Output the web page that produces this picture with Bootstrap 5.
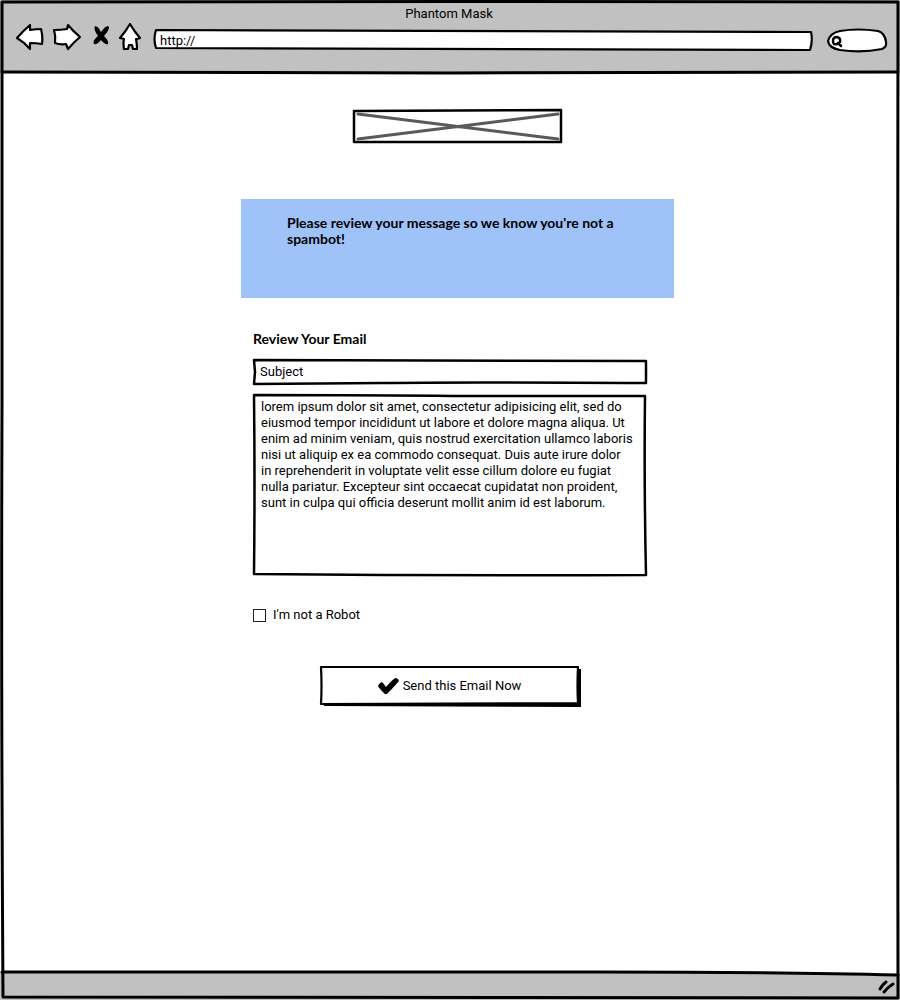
<!DOCTYPE html>
<html lang="en">
<head>
<meta charset="utf-8">
<meta name="viewport" content="width=device-width, initial-scale=1">
<title>Phantom Mask</title>
<link href="https://cdn.jsdelivr.net/npm/bootstrap@5.3.0/dist/css/bootstrap.min.css" rel="stylesheet">
<style>
body { font: 13px/16px Roboto, "Liberation Sans", sans-serif; color: #000; background: #fff; }
.chrome-bar { background: #c1c1c1; }
.top-bar { height: 72px; padding: 6px 12px 0 16px; }
.window-title { padding-right: 6px; }
.bottom-bar { height: 28px; }
.toolbar { height: 30px; margin-top: 1px; }
.sketch { fill: none; stroke: #000; stroke-width: 3; stroke-linejoin: round; stroke-linecap: round; }
.sketch path { vector-effect: non-scaling-stroke; }
.frame { position: absolute; inset: 0; width: 100%; height: 100%; overflow: visible; pointer-events: none; }
.paper { fill: #fff; }
.fine { stroke-width: 2.5; }
.hair { stroke-width: 2.2; }
.plain, .plain:focus { position: relative; display: block; width: 100%; height: 100%; border: 0; border-radius: 0; background: transparent; box-shadow: none; color: #000; font-size: 13px; line-height: 16px; }
.plain::placeholder { color: #000; opacity: 1; }
.search-box { width: 60px; }
.url-box, .search-box { height: 22px; margin-top: 4px; }
.url-box input { padding: 0 8px 0 6px; }
.column { max-width: 433px; }
.shifted { padding-left: 15px; }
.logo-box { width: 208px; height: 33px; margin-top: 38px; }
.notice { background: #9fc3f8; min-height: 99px; margin-top: 56px; padding: 16px 40px 16px 46px; }
.heading { font: 700 14px/16px Lato, sans-serif; }
.review { padding: 33px 28px 0 12px; }
.subject-box { height: 24px; margin-top: 13px; }
.subject-box input { padding: 0 8px 2px 7px; }
.message-box { height: 181px; margin-top: 11px; }
.message-box textarea { padding: 4px 12px 4px 8px; resize: none; overflow: hidden; }
.robot { margin-top: 31px; gap: 7px; }
.robot input { appearance: none; width: 13px; height: 13px; margin: 0; border: 1px solid #222; background: #fff; }
.robot input:checked { background: #000; box-shadow: inset 0 0 0 2px #fff; }
.send { width: 260px; height: 40px; margin-top: 43px; }
</style>
</head>
<body>
<div class="position-relative d-flex flex-column min-vh-100">
  <header class="chrome-bar top-bar position-relative">
    <div class="window-title text-center">Phantom Mask</div>
    <div class="toolbar d-flex align-items-center gap-2">
      <button type="button" class="btn p-0 border-0 d-flex" aria-label="Back">
        <svg class="sketch" width="28" height="30"><path class="paper hair" d="M1 15Q7 8 14 2L14 7Q20 6 25 6Q27 13 26 21Q20 20 14 20L14 26Q8 19 1 15Z"/></svg>
      </button>
      <button type="button" class="btn p-0 border-0 d-flex" aria-label="Forward">
        <svg class="sketch" width="30" height="30"><path class="paper hair" d="M2 7Q9 7 15 6L16 2Q21 8 28 14Q22 19 16 26L14 21Q8 22 3 20Q4 13 2 7Z"/></svg>
      </button>
      <button type="button" class="btn p-0 border-0 d-flex" aria-label="Stop">
        <svg width="20" height="30"><path d="M5 3Q8 3 11 9Q15 3 18 3Q21 5 14 13Q19 18 18 21Q15 22 11 17Q7 22 4 21Q2 18 8 13Q3 6 5 3Z"/></svg>
      </button>
      <button type="button" class="btn p-0 border-0 d-flex" aria-label="Home">
        <svg class="sketch" width="24" height="30"><path class="paper hair" d="M12 1Q16 8 22 15Q20 16 18 16Q19 21 19 26L15 26L14 22L11 22L10 26L6 26Q5 20 6 16L2 15Q8 8 12 1Z"/></svg>
      </button>
      <div class="url-box position-relative flex-grow-1 ms-1">
        <svg class="sketch frame" viewBox="0 0 658 22" preserveAspectRatio="none" aria-hidden="true"><path class="paper hair" d="M2 1Q330 1 657 3Q659 12 656 21Q330 20 2 19Q-1 10 2 1Z"/></svg>
        <input class="form-control plain" type="text" value="http://" aria-label="Address">
      </div>
      <div class="search-box position-relative ms-2">
        <svg class="sketch frame" viewBox="0 0 60 22" preserveAspectRatio="none" aria-hidden="true"><path class="paper hair" d="M12 2Q30-1 50 2Q57 4 58 13Q59 18 54 20Q34 24 12 21Q1 19 0 12Q2 4 12 2Z"/><path class="fine" d="M5 12Q5 8 9 8Q13 9 12 13Q10 16 6 15Q5 14 5 12M10 14L13 17"/></svg>
        <input class="form-control plain py-0 ps-3 pe-2" type="search" aria-label="Search">
      </div>
    </div>
    <svg class="sketch frame" viewBox="0 0 900 72" preserveAspectRatio="none" aria-hidden="true"><path d="M2 72Q200 73 450 73L898 72"/></svg>
  </header>

  <main class="flex-grow-1 px-3">
    <div class="shifted">
      <div class="column mx-auto">
        <div class="logo-box position-relative mx-auto">
          <svg class="sketch frame" viewBox="0 0 208 33" preserveAspectRatio="none" role="img" aria-label="Logo placeholder"><path class="paper fine" d="M0 1L207 0L207 32L0 32Z"/><path stroke="#595959" d="M4 4L204 29M4 29L204 4"/></svg>
        </div>
        <div class="notice heading">Please review your message so we know you're not a spambot!</div>
        <form class="review">
          <h1 class="heading m-0">Review Your Email</h1>
          <div class="subject-box position-relative">
            <svg class="sketch frame" viewBox="0 0 392 24" preserveAspectRatio="none" aria-hidden="true"><path class="fine" d="M1 0Q200 0 392 1L392 23Q200 22 130 23L1 24L2 12Z"/></svg>
            <input class="form-control plain" type="text" placeholder="Subject" aria-label="Subject">
          </div>
          <div class="message-box position-relative">
            <svg class="sketch frame" viewBox="0 0 392 181" preserveAspectRatio="none" aria-hidden="true"><path class="fine" d="M1 0Q130 0 200 1L391 1Q390 90 392 180Q200 181 1 179Q2 90 1 0Z"/></svg>
            <textarea class="form-control plain" aria-label="Message">lorem ipsum dolor sit amet, consectetur adipisicing elit, sed do eiusmod tempor incididunt ut labore et dolore magna aliqua. Ut enim ad minim veniam, quis nostrud exercitation ullamco laboris nisi ut aliquip ex ea commodo consequat. Duis aute irure dolor in reprehenderit in voluptate velit esse cillum dolore eu fugiat nulla pariatur. Excepteur sint occaecat cupidatat non proident, sunt in culpa qui officia deserunt mollit anim id est laborum.</textarea>
          </div>
          <div class="robot d-flex align-items-center">
            <input type="checkbox" id="robot">
            <label for="robot">I'm not a Robot</label>
          </div>
          <button type="button" class="btn plain send p-0 mx-auto">
            <svg class="sketch frame" viewBox="0 0 260 40" preserveAspectRatio="none" aria-hidden="true"><path fill="#000" stroke="none" d="M4 36L257 36L257 3L261 3L261 41L4 40Z"/><path class="paper hair" d="M1 1L258 1Q257 20 258 37L1 38Q2 20 1 1Z"/></svg>
            <span class="position-relative d-flex align-items-center justify-content-center gap-1">
              <svg width="21" height="16" aria-hidden="true"><path d="M0 8Q1 5 4 4Q6 6 8 9Q13 3 17 0Q20 0 21 3Q15 10 9 16Q7 17 5 14Q1 10 0 8Z"/></svg>
              Send this Email Now
            </span>
          </button>
        </form>
      </div>
    </div>
  </main>

  <footer class="chrome-bar bottom-bar position-relative d-flex justify-content-end align-items-center pe-1">
    <svg class="sketch frame" viewBox="0 0 900 28" preserveAspectRatio="none" aria-hidden="true"><path fill="#fff" stroke="none" d="M600 0L900 0L900 2Z"/><path d="M2 0Q300 1 600 0Q780 0 898 3"/></svg>
    <svg class="sketch position-relative" width="19" height="18" aria-hidden="true"><path d="M3 12Q5 8 9 5M7 15Q11 10 16 7"/></svg>
  </footer>
  <svg class="sketch frame" viewBox="0 0 900 1000" preserveAspectRatio="none" aria-hidden="true"><path d="M2 2Q450 1 898 2Q897 500 898 998Q450 998 3 997Q1 700 2 400Z"/></svg>
</div>
<script src="https://cdn.jsdelivr.net/npm/bootstrap@5.3.0/dist/js/bootstrap.bundle.min.js"></script>
</body>
</html>
